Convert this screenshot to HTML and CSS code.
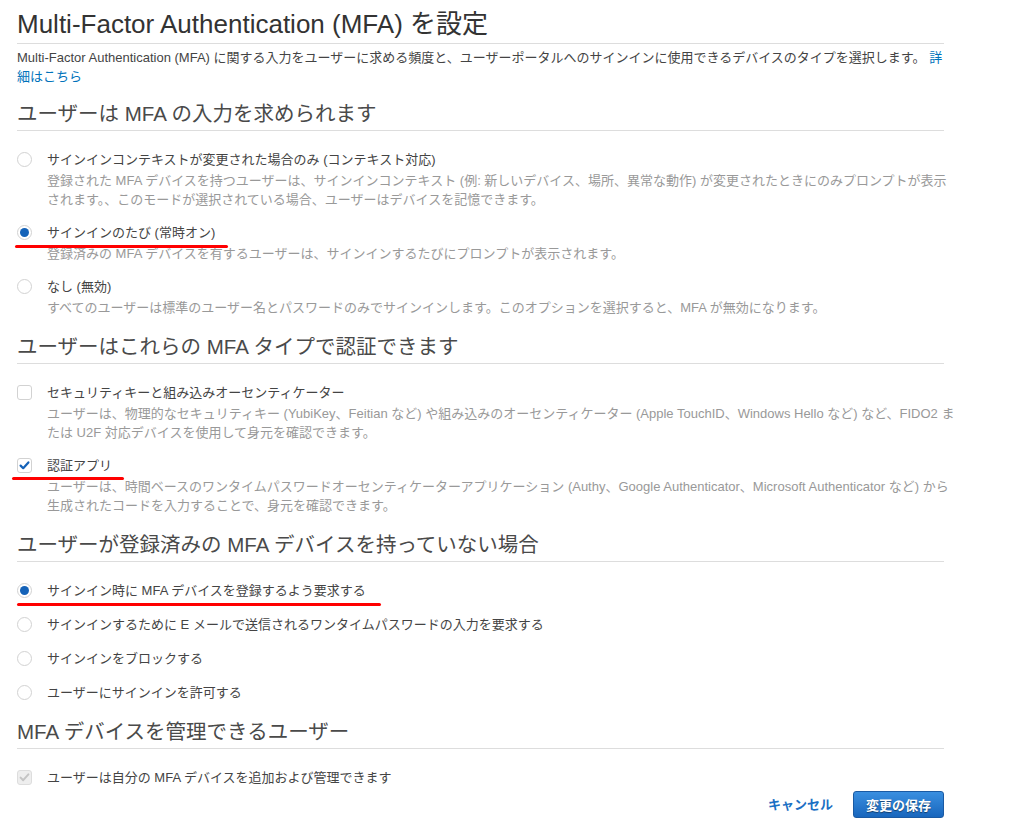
FILE: index.html
```html
<!DOCTYPE html>
<html lang="ja">
<head>
<meta charset="utf-8">
<title>MFA 設定</title>
<link rel="stylesheet" href="styles.css">
</head>
<body>
<div class="page">
  <h1 class="title">Multi-Factor Authentication (MFA) を設定</h1>
  <p class="intro">Multi-Factor Authentication (MFA) に関する入力をユーザーに求める頻度と、ユーザーポータルへのサインインに使用できるデバイスのタイプを選択します。 <a class="link" href="#">詳細はこちら</a></p>

  <h2 class="section">ユーザーは MFA の入力を求められます</h2>
  <div class="opts">
    <div class="opt">
      <span class="radio"></span>
      <div class="body">
        <div class="label">サインインコンテキストが変更された場合のみ (コンテキスト対応)</div>
        <div class="desc">登録された MFA デバイスを持つユーザーは、サインインコンテキスト (例: 新しいデバイス、場所、異常な動作) が変更されたときにのみプロンプトが表示されます。、このモードが選択されている場合、ユーザーはデバイスを記憶できます。</div>
      </div>
    </div>
    <div class="opt">
      <span class="radio on"></span>
      <div class="body">
        <div class="label">サインインのたび (常時オン)</div>
        <div class="desc">登録済みの MFA デバイスを有するユーザーは、サインインするたびにプロンプトが表示されます。</div>
      </div>
    </div>
    <div class="opt">
      <span class="radio"></span>
      <div class="body">
        <div class="label">なし (無効)</div>
        <div class="desc">すべてのユーザーは標準のユーザー名とパスワードのみでサインインします。このオプションを選択すると、MFA が無効になります。</div>
      </div>
    </div>
  </div>

  <h2 class="section">ユーザーはこれらの MFA タイプで認証できます</h2>
  <div class="opts">
    <div class="opt">
      <span class="check"></span>
      <div class="body">
        <div class="label">セキュリティキーと組み込みオーセンティケーター</div>
        <div class="desc">ユーザーは、物理的なセキュリティキー (YubiKey、Feitian など) や組み込みのオーセンティケーター (Apple TouchID、Windows Hello など) など、FIDO2 または U2F 対応デバイスを使用して身元を確認できます。</div>
      </div>
    </div>
    <div class="opt">
      <span class="check on"><svg viewBox="0 0 15 15" width="15" height="15"><path d="M3.6 7.6 L6.2 10.2 L11.4 4.4" fill="none" stroke="#1462b8" stroke-width="2.2" stroke-linecap="round" stroke-linejoin="round"/></svg></span>
      <div class="body">
        <div class="label">認証アプリ</div>
        <div class="desc">ユーザーは、時間ベースのワンタイムパスワードオーセンティケーターアプリケーション (Authy、Google Authenticator、Microsoft Authenticator など) から生成されたコードを入力することで、身元を確認できます。</div>
      </div>
    </div>
  </div>

  <h2 class="section">ユーザーが登録済みの MFA デバイスを持っていない場合</h2>
  <div class="opts simple">
    <div class="opt"><span class="radio on"></span><div class="body"><div class="label">サインイン時に MFA デバイスを登録するよう要求する</div></div></div>
    <div class="opt"><span class="radio"></span><div class="body"><div class="label">サインインするために E メールで送信されるワンタイムパスワードの入力を要求する</div></div></div>
    <div class="opt"><span class="radio"></span><div class="body"><div class="label">サインインをブロックする</div></div></div>
    <div class="opt"><span class="radio"></span><div class="body"><div class="label">ユーザーにサインインを許可する</div></div></div>
  </div>

  <h2 class="section">MFA デバイスを管理できるユーザー</h2>
  <div class="opts">
    <div class="opt">
      <span class="check disabled"><svg viewBox="0 0 15 15" width="15" height="15"><path d="M3.6 7.6 L6.2 10.2 L11.4 4.4" fill="none" stroke="#c4c4c4" stroke-width="2" stroke-linecap="round" stroke-linejoin="round"/></svg></span>
      <div class="body"><div class="label">ユーザーは自分の MFA デバイスを追加および管理できます</div></div>
    </div>
  </div>

  <div class="footer">
    <a class="cancel" href="#">キャンセル</a>
    <button class="save" type="button">変更の保存</button>
  </div>

  <span class="mark mark1"></span>
  <span class="mark mark2"></span>
  <span class="mark mark3"></span>
</div>
</body>
</html>
```
FILE: styles.css
```css
html, body {
  margin: 0;
  padding: 0;
  background: #fff;
}
body {
  font-family: "Liberation Sans", Arial, "Noto Sans CJK JP", sans-serif;
  font-size: 13px;
  color: #444;
}
.page {
  position: relative;
  width: 941px;
  padding-left: 17px;
  box-sizing: content-box;
}
.title {
  margin: 0 14px 0 0;
  padding: 8px 0 3px;
  font-size: 26px;
  line-height: 32px;
  font-weight: normal;
  color: #333;
  border-bottom: 1px solid #ddd;
}
.intro {
  margin: 4px 5px 0 0;
  line-height: 19px;
  color: #444;
}
.link {
  color: #0073bb;
  text-decoration: none;
}
.section {
  margin: 12px 14px 0 0;
  padding: 2px 0 2px;
  font-size: 20.5px;
  line-height: 28px;
  font-weight: normal;
  color: #4a4a4a;
  border-bottom: 1px solid #ddd;
}
.opts + .section {
  margin-top: 14px;
}
.opts {
  margin-top: 19px;
  display: flex;
  flex-direction: column;
  gap: 14px;
}
.opts.simple {
  gap: 15px;
}
.opt {
  display: flex;
  align-items: flex-start;
}
.body {
  flex: 1;
  min-width: 0;
}
.label {
  line-height: 19px;
  color: #444;
}
.desc {
  margin-top: 2px;
  line-height: 19px;
  color: #999;
}
.radio, .check {
  flex: none;
  width: 15px;
  height: 15px;
  margin: 2px 15px 0 0;
  box-sizing: border-box;
  border: 1px solid #d2d2d2;
  background: #fff;
  position: relative;
}
.radio {
  border-radius: 50%;
}
.radio.on::after {
  content: "";
  position: absolute;
  left: 2px;
  top: 2px;
  width: 9px;
  height: 9px;
  border-radius: 50%;
  background: #1462b8;
}
.check {
  border-radius: 3px;
}
.check svg {
  display: block;
  margin: -1px 0 0 -1px;
}
.check.disabled {
  background: #eee;
  border-color: #ddd;
}
.footer {
  margin: 4px 14px 0 0;
  display: flex;
  justify-content: flex-end;
  align-items: center;
  gap: 20px;
}
.cancel {
  color: #1a6fc4;
  font-weight: bold;
  text-decoration: none;
  line-height: 19px;
}
.save {
  height: 27px;
  padding: 0 12px;
  border: 1px solid #1a5aa3;
  border-radius: 3px;
  background: linear-gradient(#3a8fe0, #1866bd);
  color: #fff;
  font-family: inherit;
  font-size: 13px;
  font-weight: bold;
  text-shadow: 0 1px 1px rgba(0,0,0,0.45);
  cursor: pointer;
}
.mark {
  position: absolute;
  height: 3px;
  background: #f00;
  border-radius: 2px;
}
.mark1 { left: 15px; top: 245px; width: 213px; }
.mark2 { left: 12px; top: 477px; width: 112px; }
.mark3 { left: 17px; top: 603px; width: 364px; }
```
